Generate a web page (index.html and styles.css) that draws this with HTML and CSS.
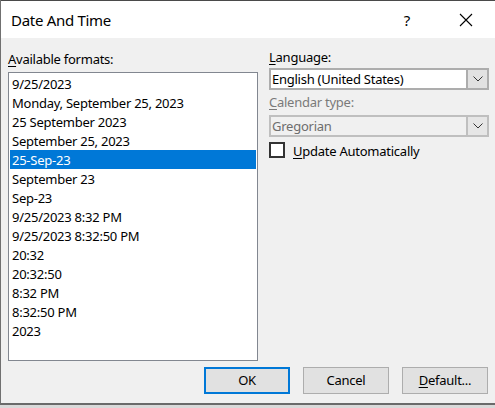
FILE: index.html
```html
<!DOCTYPE html>
<html>
<head>
<meta charset="utf-8">
<link rel="stylesheet" href="styles.css">
</head>
<body>
<div class="window">
  <div class="titlebar">
    <span class="title">Date And Time</span>
    <span class="help">?</span>
    <span class="close">
      <svg width="14" height="14" viewBox="0 0 14 14"><path d="M1 1 L13 13 M13 1 L1 13" stroke="#000" stroke-width="1.1" fill="none"/></svg>
    </span>
  </div>
  <div class="content">
    <div class="cols">
      <div class="left">
        <div class="label"><u>A</u>vailable formats:</div>
        <div class="list">
          <div class="item">9/25/2023</div>
          <div class="item">Monday, September 25, 2023</div>
          <div class="item">25 September 2023</div>
          <div class="item">September 25, 2023</div>
          <div class="item selected">25-Sep-23</div>
          <div class="item">September 23</div>
          <div class="item">Sep-23</div>
          <div class="item">9/25/2023 8:32 PM</div>
          <div class="item">9/25/2023 8:32:50 PM</div>
          <div class="item">20:32</div>
          <div class="item">20:32:50</div>
          <div class="item">8:32 PM</div>
          <div class="item">8:32:50 PM</div>
          <div class="item">2023</div>
        </div>
      </div>
      <div class="right">
        <div class="label lang-label"><u>L</u>anguage:</div>
        <div class="combo">
          <div class="combo-text">English (United States)</div>
          <div class="combo-drop"><svg width="10" height="6" viewBox="0 0 10 6"><path d="M0.5 0.5 L5 5 L9.5 0.5" stroke="#333" stroke-width="1" fill="none"/></svg></div>
        </div>
        <div class="label cal-label disabled"><u>C</u>alendar type:</div>
        <div class="combo combo-disabled">
          <div class="combo-text">Gregorian</div>
          <div class="combo-drop"><svg width="10" height="6" viewBox="0 0 10 6"><path d="M0.5 0.5 L5 5 L9.5 0.5" stroke="#333" stroke-width="1" fill="none"/></svg></div>
        </div>
        <div class="check-row">
          <span class="checkbox"></span>
          <span class="check-label"><u>U</u>pdate Automatically</span>
        </div>
      </div>
    </div>
    <div class="buttons">
      <div class="btn btn-default">OK</div>
      <div class="btn">Cancel</div>
      <div class="btn"><u>D</u>efault...</div>
    </div>
  </div>
</div>
</body>
</html>
```

FILE: styles.css
```css
html, body {
  margin: 0;
  padding: 0;
}
body {
  width: 495px;
  height: 408px;
  background: #d9d9d9;
  font-family: "Noto Sans", "Open Sans", sans-serif;
  font-size: 13px;
  letter-spacing: -0.25px;
  color: #000;
  overflow: hidden;
}
u {
  text-decoration: underline;
  text-underline-offset: 2px;
  text-decoration-thickness: 1px;
}
.window {
  width: 495px;
  height: 405px;
  box-sizing: border-box;
  border-left: 1px solid #707070;
  border-bottom: 2px solid #6a6a6a;
  background: #f0f0f0;
  display: flex;
  flex-direction: column;
}
.titlebar {
  height: 38px;
  box-sizing: border-box;
  border-top: 1px solid #4a4a4a;
  background: #fff;
  display: flex;
  align-items: center;
  flex-shrink: 0;
}
.title {
  font-size: 15px;
  letter-spacing: -0.3px;
  padding-left: 10px;
  flex: 1;
  line-height: 20px;
  margin-top: 1px;
}
.help {
  font-size: 15px;
  width: 14px;
  text-align: center;
  margin-right: 45px;
  line-height: 20px;
  margin-top: 1px;
}
.close {
  width: 14px;
  height: 14px;
  margin-right: 22px;
  display: flex;
}
.content {
  flex: 1;
  padding: 0 6px 0 7px;
  display: flex;
  flex-direction: column;
}
.cols {
  display: grid;
  grid-template-columns: 250px 220px;
  column-gap: 11px;
}
.label {
  line-height: 16px;
  height: 16px;
}
.left .label {
  margin-top: 13px;
}
.list {
  margin-top: 5px;
  height: 289px;
  box-sizing: border-box;
  border: 1px solid #828790;
  background: #fff;
  padding: 1px;
}
.item {
  height: 19px;
  line-height: 20px;
  padding-left: 2px;
  white-space: nowrap;
}
.item.selected {
  background: #0078d7;
  color: #fff;
}
.lang-label {
  margin-top: 11px;
}
.combo {
  margin-top: 3px;
  height: 22px;
  box-sizing: border-box;
  border: 2px solid #adadad;
  display: flex;
  background: #fff;
}
.combo-text {
  flex: 1;
  line-height: 18px;
  padding-left: 1px;
  white-space: nowrap;
}
.combo-drop {
  width: 19px;
  border-left: 2px solid #adadad;
  background: #e1e1e1;
  display: flex;
  align-items: center;
  justify-content: center;
}
.cal-label {
  margin-top: 4px;
}
.disabled {
  color: #7a7a7a;
}
.combo-disabled {
  margin-top: 5px;
  background: #f0f0f0;
  color: #6d6d6d;
  border-color: #bfbfbf;
}
.combo-disabled .combo-drop {
  border-left-color: #bfbfbf;
  background: #e6e6e6;
}
.check-row {
  margin-top: 5px;
  display: flex;
  align-items: center;
  height: 16px;
}
.checkbox {
  width: 16px;
  height: 16px;
  box-sizing: border-box;
  border: 2px solid #333;
  background: #fff;
}
.check-label {
  margin-left: 8px;
  line-height: 16px;
  margin-top: 1px;
}
.buttons {
  margin-top: 6px;
  display: flex;
  justify-content: flex-end;
  column-gap: 13px;
  padding-right: 1px;
}
.btn {
  width: 86px;
  height: 27px;
  box-sizing: border-box;
  border: 1px solid #adadad;
  background: #e1e1e1;
  text-align: center;
  line-height: 25px;
}
.btn-default {
  border: 2px solid #0078d7;
  line-height: 23px;
}
```
